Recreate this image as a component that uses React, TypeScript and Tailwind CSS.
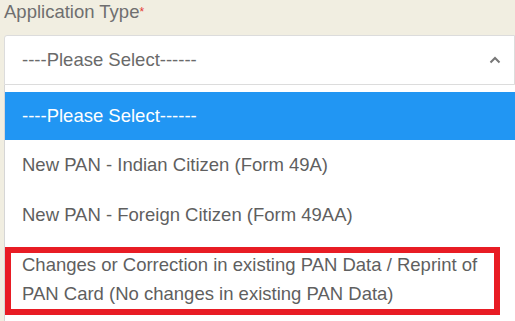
import React from 'react';

const options = [
    "New PAN - Indian Citizen (Form 49A)",
    "New PAN - Foreign Citizen (Form 49AA)",
];

const App = () => {
    return (
        <div className="w-[515px] h-[321px] overflow-hidden bg-[#f1eee1] pl-[4px] font-['Liberation_Sans',Arial,sans-serif]">
            {/* Label */}
            <div className="h-[35px] pt-[1px] text-[18.5px] leading-[22px] text-[#6f6f6f]">
                Application Type<span className="text-[#e53935] text-[12px] align-top">*</span>
            </div>

            {/* Select box */}
            <div className="h-[50px] bg-white border border-[#dcdcdc] rounded-tl-[3px] flex items-center justify-between pl-[17px] pr-[13px]">
                <span className="text-[18.5px] text-[#6a6a6a]">----Please Select------</span>
                <svg width="12" height="8" viewBox="0 0 12 8">
                    <path d="M1.5 6.5 L6 2 L10.5 6.5" fill="none" stroke="#777" strokeWidth="2" />
                </svg>
            </div>

            {/* Options list */}
            <div className="bg-white border-l border-[#d6d6d6] pt-[7px] h-[240px]">
                <div className="h-[48px] bg-[#2196f3] flex items-center pl-[17px] text-white text-[18.5px]">
                    ----Please Select------
                </div>
                {options.map((opt) => (
                    <div key={opt} className="h-[50px] flex items-center pl-[17px] text-[18.5px] text-[#5f5f5f]">
                        {opt}
                    </div>
                ))}
                <div className="pt-[7px] pr-[15px]">
                    <div className="border-[6px] border-[#e81c24] pl-[11px] pb-[1px] text-[18.5px] leading-[29px] text-[#5f5f5f] whitespace-nowrap">
                        <div className="-mt-[3px]">
                            Changes or Correction in existing PAN Data / Reprint of<br />
                            PAN Card (No changes in existing PAN Data)
                        </div>
                    </div>
                </div>
            </div>
        </div>
    );
};

export default App;
